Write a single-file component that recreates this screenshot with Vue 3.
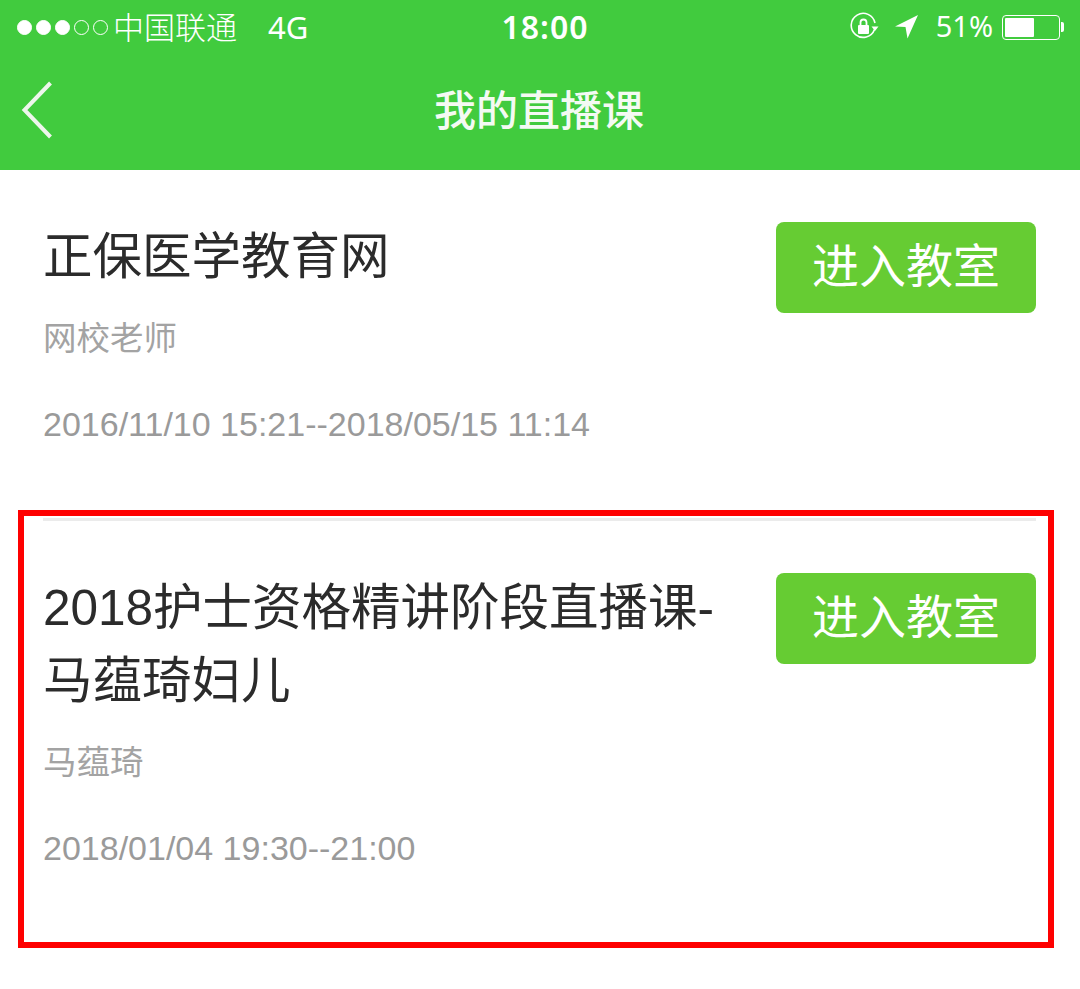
<template>
  <div class="page">
    <header class="top">
      <div class="status">
        <div class="status-left">
          <span class="signal">
            <i v-for="n in 5" :key="n" class="dot" :class="{ on: n <= 3 }"></i>
          </span>
          <span class="carrier">中国联通</span>
          <span class="net">4G</span>
        </div>
        <div class="clock">18:00</div>
        <div class="status-right">
          <svg class="lock" width="30" height="30" viewBox="0 0 30 30" fill="none">
            <path d="M25.5 17.5A12 12 0 1 1 26 11" stroke="#fff" stroke-width="1.6" />
            <path d="M22.5 14.5h7l-3.5 4.5z" fill="#fff" />
            <rect x="9" y="13" width="11" height="9" rx="1" fill="#fff" />
            <path d="M11.5 13v-2.500a3 3 0 0 1 6 0V13" stroke="#fff" stroke-width="1.800" />
          </svg>
          <svg class="arrow" width="24" height="24" viewBox="0 0 24 24">
            <path d="M0 11.500 23 0 12.500 23.500 10.500 12z" fill="#fff" />
          </svg>
          <span class="percent">51%</span>
          <span class="battery"><span class="level" :style="{ width: battery + '%' }"></span></span>
          <span class="cap"></span>
        </div>
      </div>
      <nav class="nav">
        <svg class="back" width="32" height="60" viewBox="0 0 32 60" fill="none">
          <path d="M29.500 3 3.500 30 29.500 57" stroke="#eef6ec" stroke-width="4" />
        </svg>
        <h1>我的直播课</h1>
      </nav>
    </header>

    <ul class="list">
      <li v-for="c in courses" :key="c.date" class="item">
        <div class="info">
          <div class="title">{{ c.title }}</div>
          <div class="teacher">{{ c.teacher }}</div>
          <div class="date">{{ c.date }}</div>
        </div>
        <button class="enter">进入教室</button>
      </li>
    </ul>

    <div class="mark"></div>
  </div>
</template>

<script setup>
const battery = 55

const courses = [
  {
    title: '正保医学教育网',
    teacher: '网校老师',
    date: '2016/11/10 15:21--2018/05/15 11:14',
  },
  {
    title: '2018护士资格精讲阶段直播课-马蕴琦妇儿',
    teacher: '马蕴琦',
    date: '2018/01/04 19:30--21:00',
  },
]
</script>

<style>
html,
body {
  margin: 0;
  background: #fff;
}
</style>

<style scoped>
.page {
  position: relative;
  width: 1080px;
  height: 989px;
  overflow: hidden;
  background: #fff;
  font-family: "Liberation Sans", "Noto Sans CJK SC", sans-serif;
}
.top {
  height: 170px;
  background: #41cb3e;
  color: #fff;
}
.status {
  display: flex;
  align-items: center;
  justify-content: space-between;
  height: 54px;
  padding: 0 16px 0 17px;
  position: relative;
  font-family: "Noto Sans", "Noto Sans CJK SC", sans-serif;
}
.status-left,
.status-right {
  display: flex;
  align-items: center;
}
.signal {
  display: flex;
  gap: 4px;
  margin-right: 5px;
}
.dot {
  width: 15px;
  height: 15px;
  box-sizing: border-box;
  border: 1px solid #fff;
  border-radius: 50%;
}
.dot.on {
  background: #fff;
}
.carrier {
  font-size: 31px;
  line-height: 54px;
  font-weight: 300;
}
.net {
  margin-left: 31px;
  font-size: 31px;
  line-height: 54px;
}
.clock {
  position: absolute;
  left: 10px;
  right: 0;
  text-align: center;
  font-size: 32px;
  letter-spacing: 1px;
  font-weight: 600;
  line-height: 54px;
}
.lock {
  margin-right: 16px;
}
.arrow {
  margin-right: 17px;
}
.percent {
  font-size: 29px;
  margin-right: 9px;
  margin-bottom: 4px;
}
.battery {
  box-sizing: border-box;
  width: 58px;
  height: 25px;
  padding: 2px;
  border: 1.500px solid #fff;
  border-radius: 4px;
}
.level {
  display: block;
  height: 100%;
  background: #fff;
  border-radius: 1px;
}
.cap {
  width: 3px;
  height: 10px;
  margin-left: 1px;
  background: #fff;
  border-radius: 0 2px 2px 0;
}
.nav {
  position: relative;
  height: 116px;
  display: flex;
  align-items: center;
  justify-content: center;
  padding-right: 2px;
}
.back {
  position: absolute;
  left: 21px;
  top: 26px;
}
.nav h1 {
  margin: 0;
  font-size: 42px;
  font-weight: 500;
  line-height: 116px;
  color: #f4faf3;
}
.list {
  list-style: none;
  margin: 0;
  padding: 0 44px 0 43px;
}
.item {
  display: flex;
  justify-content: space-between;
  align-items: flex-start;
  padding-top: 50px;
  height: 298px;
  border-bottom: 3px solid #ebebeb;
}
.item:last-child {
  height: auto;
  border-bottom: 0;
}
.info {
  width: 690px;
}
.title {
  font-size: 49.500px;
  line-height: 73px;
  color: #2b2b2b;
}
.teacher {
  margin-top: 23px;
  font-size: 33.500px;
  line-height: 46px;
  color: #a3a3a3;
}
.date {
  margin-top: 39px;
  font-size: 34px;
  line-height: 46px;
  color: #9a9a9a;
}
.enter {
  box-sizing: border-box;
  width: 260px;
  height: 91px;
  margin-top: 2px;
  padding: 0 0 10px;
  border: 0;
  border-radius: 8px;
  background: #66cc33;
  color: #fff;
  font-family: inherit;
  font-size: 47px;
}
.mark {
  position: absolute;
  left: 18px;
  top: 510px;
  width: 1036px;
  height: 438px;
  box-sizing: border-box;
  border: 6px solid #fe0000;
  pointer-events: none;
}
</style>
